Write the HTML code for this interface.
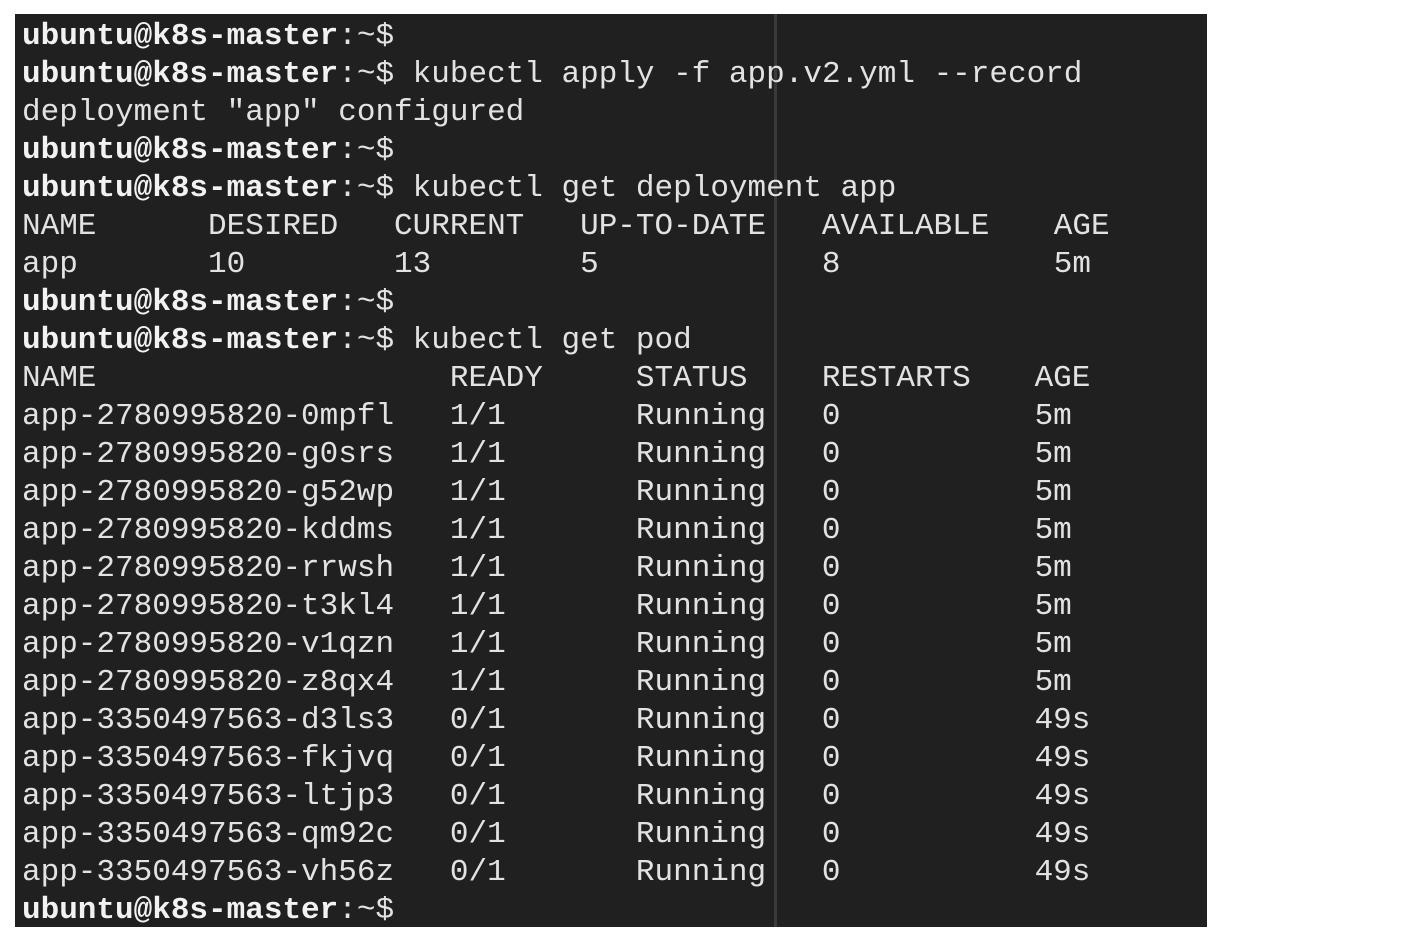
<!DOCTYPE html>
<html><head><meta charset="utf-8"><style>
html,body{margin:0;padding:0;background:#fff;width:1422px;height:950px;overflow:hidden}
.t{position:absolute;left:15px;top:14px;width:1192px;height:913px;background:#202020}
.v{position:absolute;left:774px;top:14px;width:3px;height:913px;background:#3a3a3a}
pre{position:absolute;left:22px;top:18px;margin:0;font-family:"Liberation Mono",monospace;font-size:31px;line-height:38px;color:#e2e2e2;letter-spacing:0}
b{font-weight:bold;color:#f2f2f2}
i{font-style:normal;position:relative;left:-10px}
u{text-decoration:none;position:relative;left:8px}
</style></head><body>
<div class="t"></div><div class="v"></div>
<pre><b>ubuntu@k8s-master</b>:~$
<b>ubuntu@k8s-master</b>:~$ kubectl apply -f app.v2.yml --record
deployment "app" configured
<b>ubuntu@k8s-master</b>:~$
<b>ubuntu@k8s-master</b>:~$ kubectl get deployment app
NAME      DESIRED   CURRENT   UP-TO-DATE   AVAILABLE    <i>AGE</i>
app       10        13        5            8            <i>5m</i>
<b>ubuntu@k8s-master</b>:~$
<b>ubuntu@k8s-master</b>:~$ kubectl get pod
NAME                   READY     STATUS    RESTARTS   <u>AGE</u>
app-2780995820-0mpfl   1/1       Running   0          <u>5m</u>
app-2780995820-g0srs   1/1       Running   0          <u>5m</u>
app-2780995820-g52wp   1/1       Running   0          <u>5m</u>
app-2780995820-kddms   1/1       Running   0          <u>5m</u>
app-2780995820-rrwsh   1/1       Running   0          <u>5m</u>
app-2780995820-t3kl4   1/1       Running   0          <u>5m</u>
app-2780995820-v1qzn   1/1       Running   0          <u>5m</u>
app-2780995820-z8qx4   1/1       Running   0          <u>5m</u>
app-3350497563-d3ls3   0/1       Running   0          <u>49s</u>
app-3350497563-fkjvq   0/1       Running   0          <u>49s</u>
app-3350497563-ltjp3   0/1       Running   0          <u>49s</u>
app-3350497563-qm92c   0/1       Running   0          <u>49s</u>
app-3350497563-vh56z   0/1       Running   0          <u>49s</u>
<b>ubuntu@k8s-master</b>:~$</pre>
</body></html>
